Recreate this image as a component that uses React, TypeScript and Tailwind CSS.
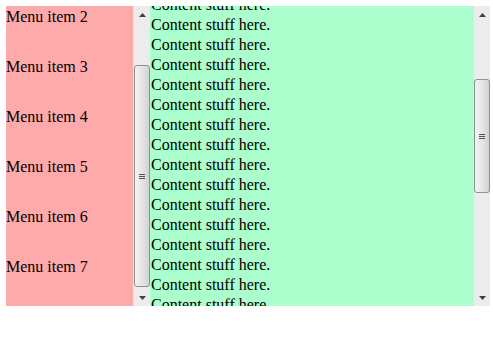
import React from "react";

const serif = { fontFamily: '"Liberation Serif", "Times New Roman", serif' };

function Arrow({ up }: { up?: boolean }) {
  return (
    <div className="flex h-[17px] items-center justify-center">
      <svg width="7" height="4" viewBox="0 0 7 4">
        {up ? <path d="M0 4 L3.5 0 L7 4 Z" fill="#404040" /> : <path d="M0 0 L7 0 L3.5 4 Z" fill="#404040" />}
      </svg>
    </div>
  );
}

function ScrollBar({ before, thumb }: { before: number; thumb: number }) {
  return (
    <div className="flex w-[17px] shrink-0 flex-col border-l border-[#e3e3e3] bg-[#ececec]">
      <Arrow up />
      <div style={{ height: before }} />
      <div
        className="flex items-center justify-center rounded-[3px] border border-[#8e8f8f] bg-gradient-to-r from-[#f3f3f3] via-[#e6e6e6] to-[#d2d2d2]"
        style={{ height: thumb }}
      >
        <div className="flex flex-col gap-[1px]">
          <div className="h-px w-[6px] bg-[#555]" />
          <div className="h-px w-[6px] bg-[#555]" />
          <div className="h-px w-[6px] bg-[#555]" />
        </div>
      </div>
      <div className="flex-1" />
      <Arrow />
    </div>
  );
}

export default function App() {
  const menu = [1, 2, 3, 4, 5, 6, 7, 8];
  const lines = Array.from({ length: 24 }, (_, i) => i);

  return (
    <div className="h-[358px] bg-white p-[6px] text-[16px] text-black" style={serif}>
      <div className="flex h-[300px]">
        {/* Menu */}
        <div className="flex w-[144px] shrink-0">
          <div className="flex-1 overflow-hidden bg-[#ffaaaa]">
            <div className="mt-[-48px]">
              {menu.map((n) => (
                <div key={n} className="h-[50px] leading-[18px]">
                  Menu item {n}
                </div>
              ))}
            </div>
          </div>
          <ScrollBar before={42} thumb={222} />
        </div>

        {/* Content */}
        <div className="flex w-[340px] shrink-0">
          <div className="flex-1 overflow-hidden bg-[#aaffcc]">
            <div className="mt-[-11px] pl-px">
              {lines.map((i) => (
                <div key={i} className="leading-[20px]">
                  Content stuff here.
                </div>
              ))}
            </div>
          </div>
          <ScrollBar before={56} thumb={114} />
        </div>
      </div>
    </div>
  );
}
